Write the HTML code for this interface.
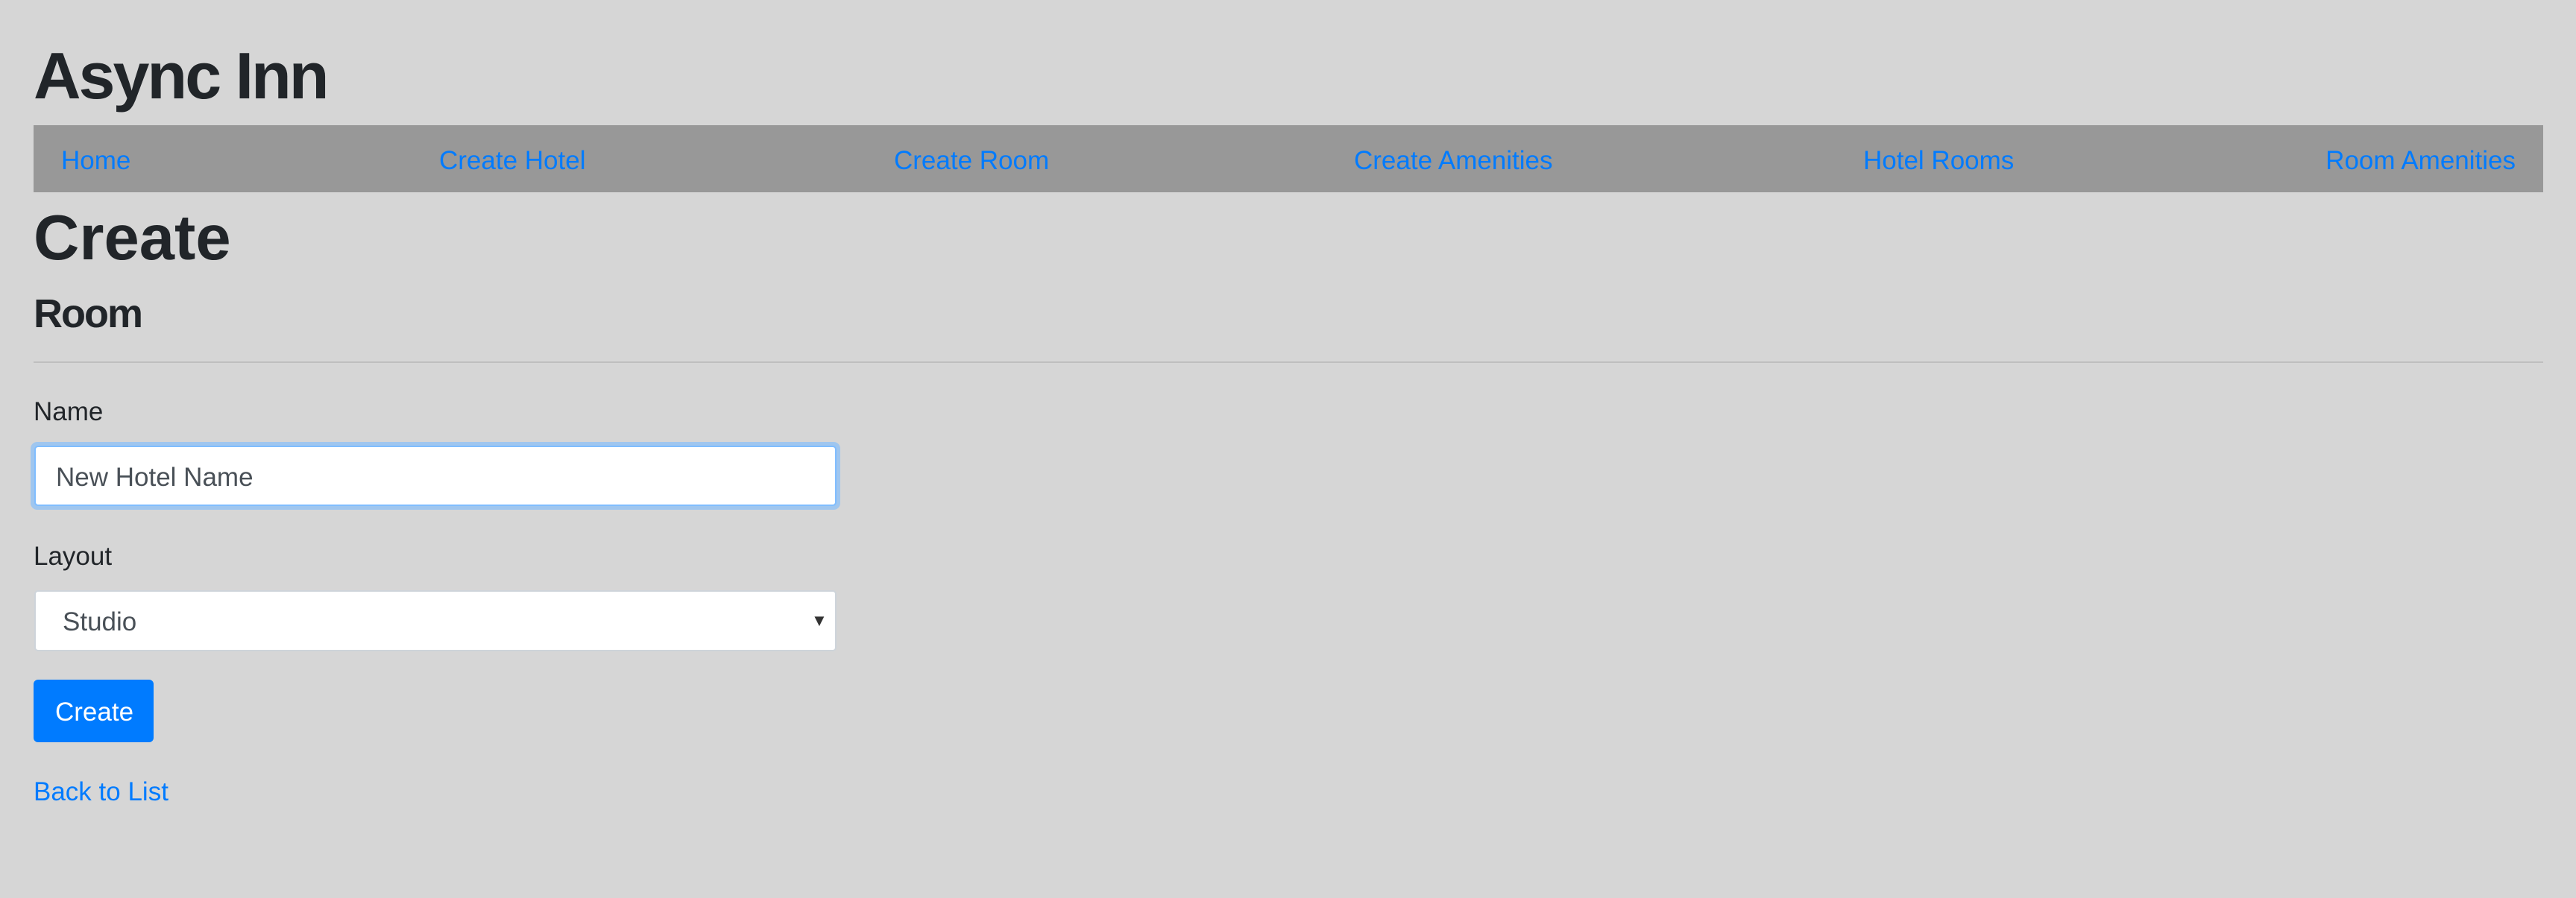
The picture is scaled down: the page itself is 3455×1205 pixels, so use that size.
<!DOCTYPE html>
<html><head><meta charset="utf-8"><style>
html,body{margin:0;padding:0;}
body{width:3455px;height:1205px;background:#d6d6d6;font-family:"Liberation Sans",sans-serif;color:#212529;position:relative;overflow:hidden;}
.a{position:absolute;line-height:1;white-space:nowrap;}
.nav{position:absolute;left:45px;top:168px;width:3366px;height:90px;background:#989898;}
.lnk{color:#007bff;font-size:35px;}
</style></head><body>
<div class="a" style="left:45px;top:58px;font-size:88px;font-weight:bold;letter-spacing:-3px;">Async Inn</div>
<div class="nav"></div>
<div class="a lnk" style="left:82px;top:198px;">Home</div>
<div class="a lnk" style="left:589px;top:198px;">Create Hotel</div>
<div class="a lnk" style="left:1199px;top:198px;">Create Room</div>
<div class="a lnk" style="left:1816px;top:198px;">Create Amenities</div>
<div class="a lnk" style="left:2499px;top:198px;">Hotel Rooms</div>
<div class="a lnk" style="right:81px;top:198px;">Room Amenities</div>
<div class="a" style="left:45px;top:277px;font-size:85px;font-weight:bold;">Create</div>
<div class="a" style="left:45px;top:394px;font-size:54px;font-weight:bold;letter-spacing:-2px;">Room</div>
<div style="position:absolute;left:45px;top:485px;width:3366px;height:2px;background:#bfbfbf;"></div>
<div class="a" style="left:45px;top:535px;font-size:35px;">Name</div>
<div style="position:absolute;left:41px;top:593px;width:1086px;height:91px;border-radius:9px;background:#9fc6ef;"></div>
<div style="position:absolute;left:46px;top:598px;width:1072px;height:77px;border:2px solid #80bdff;border-radius:5px;background:#fff;"></div>
<div class="a" style="left:75px;top:623px;font-size:35px;color:#495057;">New Hotel Name</div>
<div class="a" style="left:45px;top:729px;font-size:35px;">Layout</div>
<div style="position:absolute;left:46px;top:792px;width:1072px;height:78px;border:2px solid #ced4da;border-radius:5px;background:#fff;"></div>
<div class="a" style="left:84px;top:817px;font-size:35px;color:#495057;">Studio</div>
<div class="a" style="left:1088px;top:822px;font-size:22px;color:#333;">▼</div>
<div style="position:absolute;left:45px;top:912px;width:161px;height:84px;border-radius:6px;background:#007bff;"></div>
<div class="a" style="left:74px;top:938px;font-size:35px;color:#fff;">Create</div>
<div class="a lnk" style="left:45px;top:1045px;">Back to List</div>
</body></html>
